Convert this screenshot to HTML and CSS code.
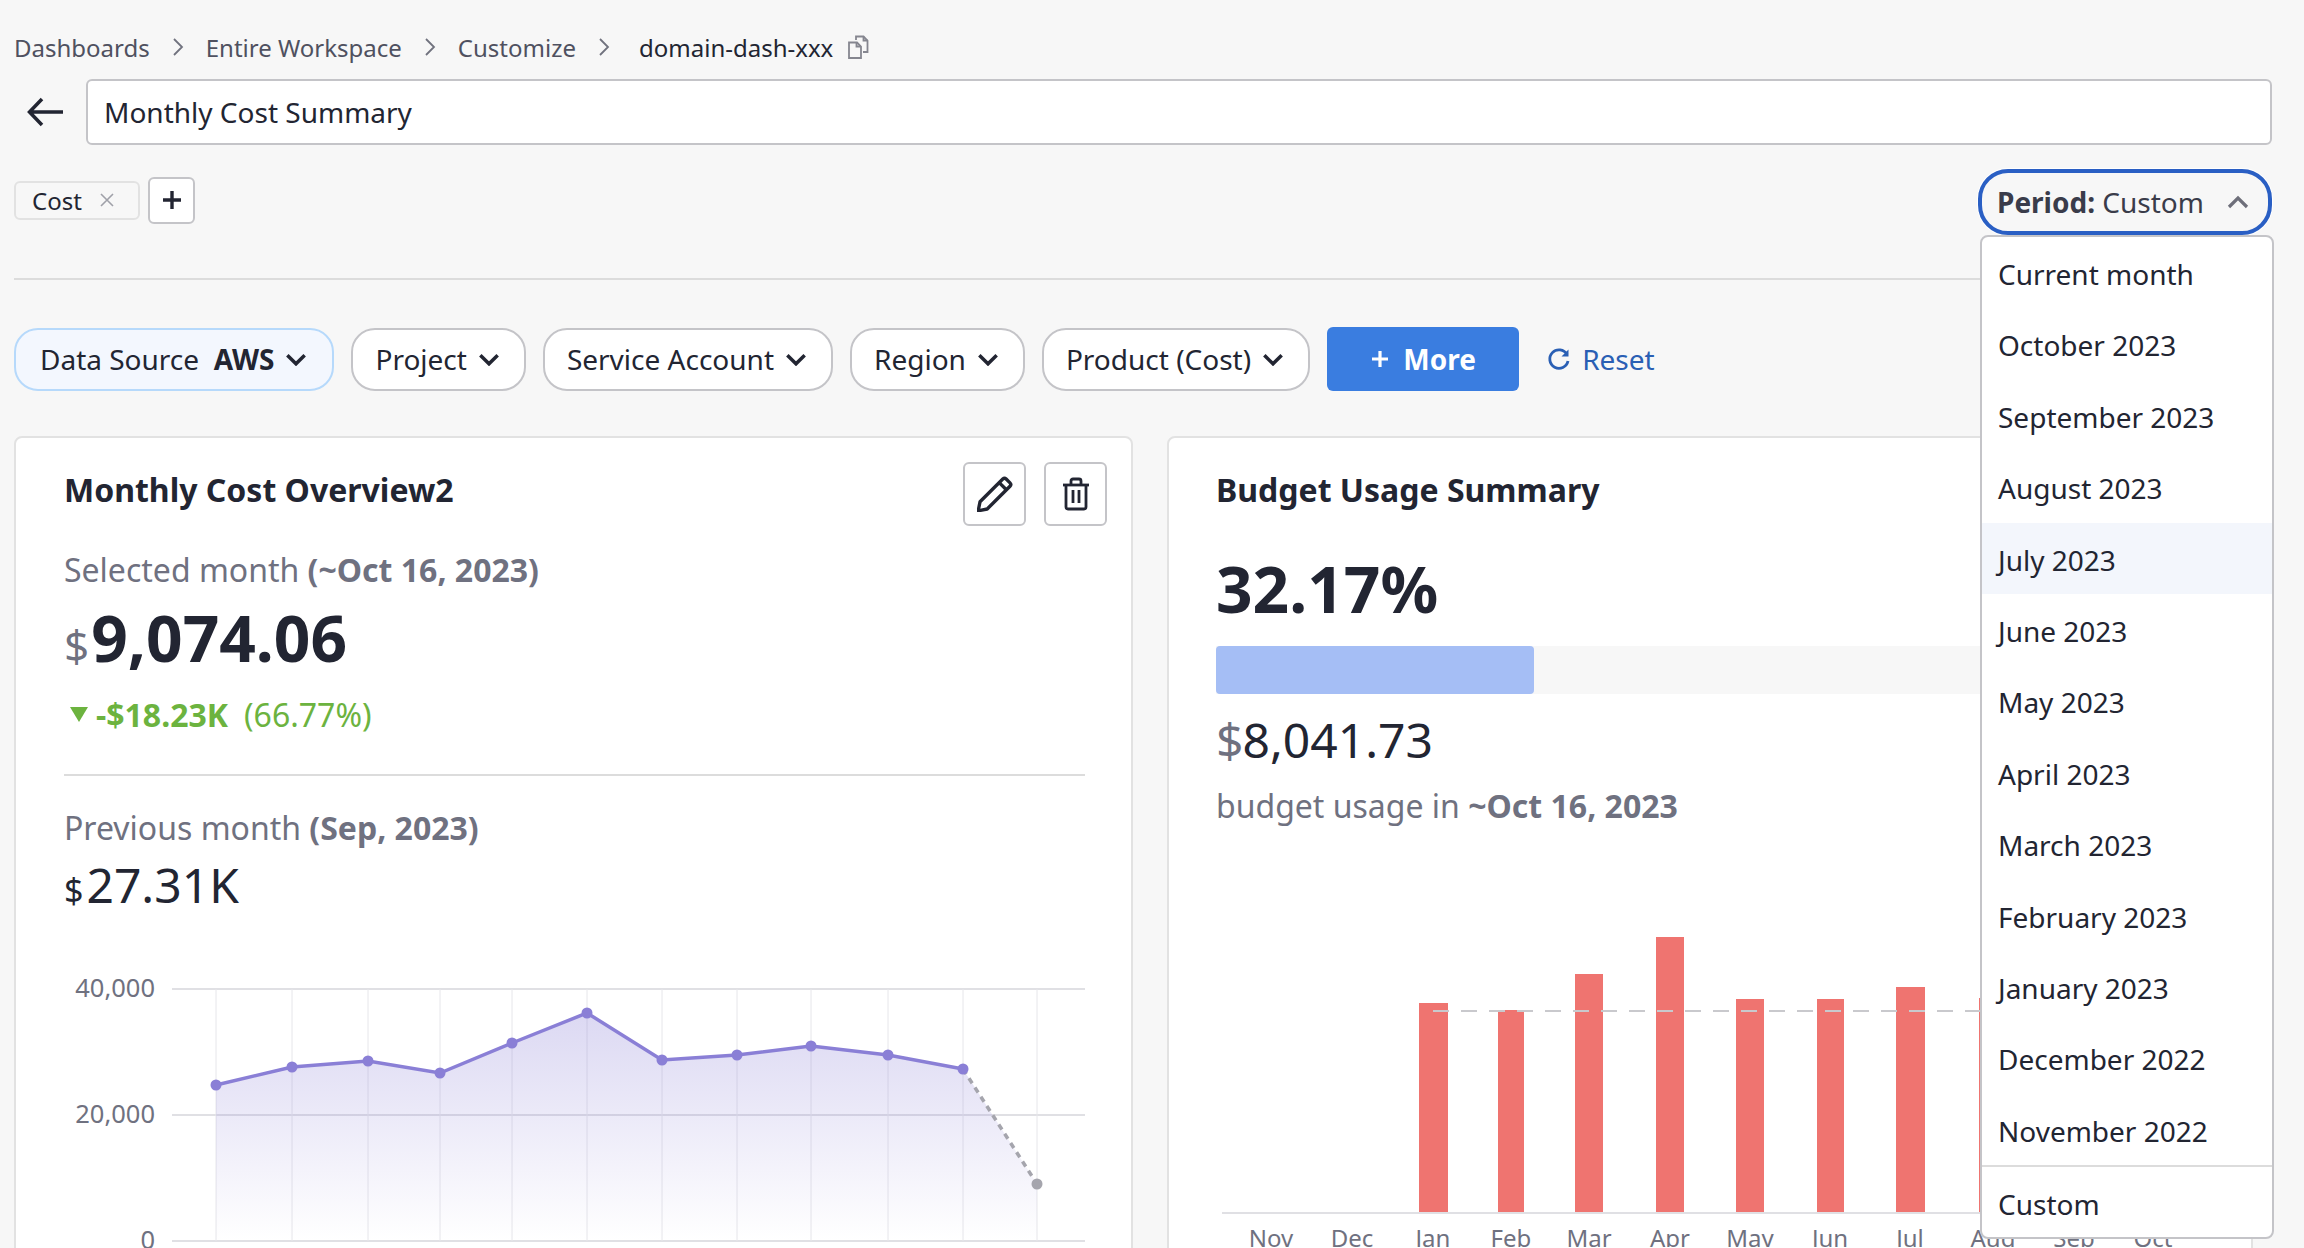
FILE: index.html
```html
<!DOCTYPE html>
<html lang="en">
<head>
    <meta charset="UTF-8">
    <title>Monthly Cost Summary</title>
    <link rel="stylesheet" href="styles.css">
</head>
<body>
    <div class="page">
        <nav class="breadcrumb">
            <span>Dashboards</span>
            <svg class="crumb-sep" viewBox="0 0 12 20"><path d="M2 2l8 8-8 8"/></svg>
            <span>Entire Workspace</span>
            <svg class="crumb-sep" viewBox="0 0 12 20"><path d="M2 2l8 8-8 8"/></svg>
            <span>Customize</span>
            <svg class="crumb-sep" viewBox="0 0 12 20"><path d="M2 2l8 8-8 8"/></svg>
            <span class="crumb-current">domain-dash-xxx</span>
            <svg class="copy-icon" viewBox="0 0 24 24"><path d="M9 5V1.500h7.500l4 4V17H16"/><path d="M16.500 1.500v4h4"/><path d="M2 7.500h8l4 4V23H2z"/><path d="M9.500 7.500v4H14"/></svg>
        </nav>

        <div class="title-row">
            <svg class="back-icon" viewBox="0 0 38 30"><path d="M36 15H3M15 2L2.500 15 15 28"/></svg>
            <div class="title-input">Monthly Cost Summary</div>
        </div>

        <div class="tag-row">
            <div class="tags">
                <div class="tag">Cost
                    <svg class="tag-x" viewBox="0 0 14 14"><path d="M1 1l12 12M13 1L1 13"/></svg>
                </div>
                <div class="tag-add">
                    <svg viewBox="0 0 20 20"><path d="M10 1v18M1 10h18"/></svg>
                </div>
            </div>
            <div class="period">
                <div class="period-btn">
                    <span><b>Period:</b> Custom</span>
                    <svg class="period-chevron" viewBox="0 0 22 14"><path d="M2 12l9-9 9 9"/></svg>
                </div>
                <ul class="period-menu">
                    <li>Current month</li>
                    <li>October 2023</li>
                    <li>September 2023</li>
                    <li>August 2023</li>
                    <li class="hovered">July 2023</li>
                    <li>June 2023</li>
                    <li>May 2023</li>
                    <li>April 2023</li>
                    <li>March 2023</li>
                    <li>February 2023</li>
                    <li>January 2023</li>
                    <li>December 2022</li>
                    <li>November 2022</li>
                    <li class="custom">Custom</li>
                </ul>
            </div>
        </div>

        <hr class="divider">

        <div class="filters">
            <div class="filter selected">
                <span>Data Source&nbsp; <b>AWS</b></span>
                <svg class="chevron" viewBox="0 0 20 12"><path d="M2 2l8 8 8-8"/></svg>
            </div>
            <div class="filter">
                <span>Project</span>
                <svg class="chevron" viewBox="0 0 20 12"><path d="M2 2l8 8 8-8"/></svg>
            </div>
            <div class="filter">
                <span>Service Account</span>
                <svg class="chevron" viewBox="0 0 20 12"><path d="M2 2l8 8 8-8"/></svg>
            </div>
            <div class="filter">
                <span>Region</span>
                <svg class="chevron" viewBox="0 0 20 12"><path d="M2 2l8 8 8-8"/></svg>
            </div>
            <div class="filter">
                <span>Product (Cost)</span>
                <svg class="chevron" viewBox="0 0 20 12"><path d="M2 2l8 8 8-8"/></svg>
            </div>
            <div class="more-btn">
                <svg viewBox="0 0 20 20"><path d="M10 2v16M2 10h16"/></svg>
                More
            </div>
            <div class="reset">
                <svg viewBox="0 0 24 24"><path class="reset-arc" d="M20 7.500A9.200 9.200 0 1 0 21 14"/><path class="reset-tip" d="M21.500 2.500v7h-7z"/></svg>
                Reset
            </div>
        </div>

        <div class="cards">
            <section class="card">
                <div class="card-head">
                    <h2>Monthly Cost Overview2</h2>
                    <div class="card-actions">
                        <div class="icon-btn">
                            <svg viewBox="3 3 30 30"><path d="M4 32l1.500-7.500L24.500 5.500a2 2 0 0 1 2.800 0l3.200 3.200a2 2 0 0 1 0 2.800L11.500 30.500z"/><path d="M21.500 8.500l6 6"/></svg>
                        </div>
                        <div class="icon-btn">
                            <svg viewBox="0 0 36 36"><path d="M5 9h26"/><path d="M13 8V5a2 2 0 0 1 2-2h6a2 2 0 0 1 2 2v3"/><path d="M8 9v22a2 2 0 0 0 2 2h16a2 2 0 0 0 2-2V9"/><path d="M15 14v13M21 14v13"/></svg>
                        </div>
                    </div>
                </div>
                <p class="label first-label">Selected month <b>(~Oct 16, 2023)</b></p>
                <p class="amount-big"><span class="currency">$</span>9,074.06</p>
                <p class="delta"><i class="delta-arrow"></i><b>-$18.23K</b><span>(66.77%)</span></p>
                <hr class="card-divider">
                <p class="label prev-label">Previous month <b>(Sep, 2023)</b></p>
                <p class="amount-mid prev-amount"><span class="currency-dark">$</span>27.31K</p>
                <svg class="trend-chart" viewBox="64 960 1021 288">
                    <defs>
                        <linearGradient id="areaFill" x1="0" y1="0" x2="0" y2="1">
                            <stop offset="0" stop-color="#8a7fd6" stop-opacity="0.3"/>
                            <stop offset="1" stop-color="#8a7fd6" stop-opacity="0"/>
                        </linearGradient>
                    </defs>
                    <path class="grid" d="M172 989H1085M172 1115H1085M172 1241H1085"/>
                    <path class="grid-v" d="M216 989V1241M292 989V1241M368 989V1241M440 989V1241M512 989V1241M587 989V1241M662 989V1241M737 989V1241M811 989V1241M888 989V1241M963 989V1241M1037 989V1241"/>
                    <path fill="url(#areaFill)" d="M216 1085L292 1067 368 1061 440 1073 512 1043 587 1013 662 1060 737 1055 811 1046 888 1055 963 1069 1037 1184V1241H216z"/>
                    <path class="trend-line" d="M216 1085L292 1067 368 1061 440 1073 512 1043 587 1013 662 1060 737 1055 811 1046 888 1055 963 1069"/>
                    <path class="trend-forecast" d="M963 1069L1037 1184"/>
                    <g class="trend-dots">
                        <circle cx="216" cy="1085" r="5.500"/><circle cx="292" cy="1067" r="5.500"/><circle cx="368" cy="1061" r="5.500"/><circle cx="440" cy="1073" r="5.500"/><circle cx="512" cy="1043" r="5.500"/><circle cx="587" cy="1013" r="5.500"/><circle cx="662" cy="1060" r="5.500"/><circle cx="737" cy="1055" r="5.500"/><circle cx="811" cy="1046" r="5.500"/><circle cx="888" cy="1055" r="5.500"/><circle cx="963" cy="1069" r="5.500"/>
                    </g>
                    <circle class="forecast-dot" cx="1037" cy="1184" r="5.500"/>
                    <text class="axis-text" x="155" y="997" text-anchor="end">40,000</text>
                    <text class="axis-text" x="155" y="1123" text-anchor="end">20,000</text>
                    <text class="axis-text" x="155" y="1249" text-anchor="end">0</text>
                </svg>
            </section>

            <section class="card card-right">
                <div class="card-head">
                    <h2>Budget Usage Summary</h2>
                </div>
                <p class="amount-big usage-pct">32.17%</p>
                <div class="usage-bar"><div class="usage-fill"></div></div>
                <p class="amount-mid usage-amount"><span class="currency-mid">$</span>8,041.73</p>
                <p class="label usage-label">budget usage in <b>~Oct 16, 2023</b></p>
                <svg class="budget-chart" viewBox="1216 930 1035 318">
                    <g class="bars">
                        <rect x="1419" y="1004" width="29" height="210"/>
                        <rect x="1498" y="1011" width="26" height="203"/>
                        <rect x="1575" y="975" width="28" height="239"/>
                        <rect x="1656" y="938" width="28" height="276"/>
                        <rect x="1736" y="1000" width="28" height="214"/>
                        <rect x="1817" y="1000" width="27" height="214"/>
                        <rect x="1896" y="988" width="29" height="226"/>
                        <rect x="1979" y="999" width="28" height="215"/>
                    </g>
                    <path class="budget-line" d="M1433 1012H2160"/>
                    <path class="grid" d="M1222 1214H2251"/>
                    <g class="month-labels">
                        <text x="1271" y="1248">Nov</text>
                        <text x="1352" y="1248">Dec</text>
                        <text x="1433" y="1248">Jan</text>
                        <text x="1511" y="1248">Feb</text>
                        <text x="1589" y="1248">Mar</text>
                        <text x="1670" y="1248">Apr</text>
                        <text x="1750" y="1248">May</text>
                        <text x="1830" y="1248">Jun</text>
                        <text x="1910" y="1248">Jul</text>
                        <text x="1993" y="1248">Aug</text>
                        <text x="2074" y="1248">Sep</text>
                        <text x="2153" y="1248">Oct</text>
                    </g>
                </svg>
            </section>
        </div>
    </div>
</body>
</html>
```

FILE: styles.css
```css
* {
    box-sizing: border-box;
}
html, body {
    height: 1248px;
    overflow: hidden;
}
body {
    margin: 0;
    background: #f7f7f7;
    color: #222532;
    font-family: "Noto Sans", "Open Sans", sans-serif;
}
p, h2, ul {
    margin: 0;
    padding: 0;
}
svg {
    display: block;
    fill: none;
}
.page {
    padding: 29px 32px 0 14px;
}

/* breadcrumb */
.breadcrumb {
    display: flex;
    align-items: center;
    height: 36px;
    font-size: 24px;
    color: #4f5160;
}
.crumb-sep {
    width: 12px;
    height: 20px;
    margin: 0 22px 0 22px;
    stroke: #70727e;
    stroke-width: 1.800;
}
.crumb-current {
    color: #222532;
    margin-left: 7px;
}
.copy-icon {
    width: 24px;
    height: 24px;
    margin-left: 14px;
    stroke: #85868f;
    stroke-width: 1.800;
}

/* title */
.title-row {
    display: flex;
    align-items: center;
    margin-top: 14px;
}
.back-icon {
    width: 38px;
    height: 30px;
    margin: 0 21px 0 13px;
    stroke: #222532;
    stroke-width: 3.500;
}
.title-input {
    flex: 1;
    height: 66px;
    line-height: 62px;
    padding-left: 16px;
    font-size: 28px;
    background: #fff;
    border: 2px solid #c4c4c8;
    border-radius: 6px;
}

/* tags and period */
.tag-row {
    display: flex;
    justify-content: space-between;
    margin-top: 24px;
}
.tags {
    display: flex;
    align-items: center;
    gap: 8px;
    height: 56px;
    margin-top: 3px;
}
.tag {
    display: flex;
    align-items: center;
    justify-content: space-between;
    width: 126px;
    height: 39px;
    padding: 0 24px 0 16px;
    font-size: 24px;
    background: #f7f7f7;
    border: 2px solid #e2e2e2;
    border-radius: 6px;
}
.tag-x {
    width: 14px;
    height: 14px;
    stroke: #a0a1a9;
    stroke-width: 1.600;
}
.tag-add {
    display: flex;
    align-items: center;
    justify-content: center;
    width: 47px;
    height: 47px;
    background: #fff;
    border: 2px solid #c4c4c8;
    border-radius: 6px;
}
.tag-add svg {
    width: 20px;
    height: 20px;
    stroke: #222532;
    stroke-width: 3.400;
}
.period {
    position: relative;
}
.period-btn {
    display: flex;
    align-items: center;
    justify-content: space-between;
    width: 294px;
    height: 66px;
    padding: 0 19px 0 15px;
    font-size: 28px;
    color: #3a3c4a;
    border: 4px solid #2a5fc4;
    border-radius: 30px;
    box-shadow: 0 0 0 1px #fff;
}
.period-chevron {
    width: 22px;
    height: 14px;
    stroke: #6e6f7a;
    stroke-width: 3.200;
}
.period-menu {
    position: absolute;
    top: 66px;
    right: -2px;
    z-index: 5;
    width: 294px;
    height: 1004px;
    list-style: none;
    font-size: 28px;
    background: #fff;
    border: 2px solid #c4c4c8;
    border-radius: 8px;
}
.period-menu li {
    height: 71.400px;
    line-height: 75px;
    padding-left: 16px;
}
.period-menu .hovered {
    background: #f3f6fc;
}
.period-menu .custom {
    height: 72px;
    line-height: 75px;
    border-top: 2px solid #dcdcdc;
}
.divider {
    height: 2px;
    margin: 43px 0 0;
    border: 0;
    background: #dcdcdc;
}

/* filters */
.filters {
    display: flex;
    align-items: center;
    gap: 17px;
    margin-top: 47px;
}
.filter {
    display: flex;
    align-items: center;
    gap: 11px;
    height: 63px;
    padding: 0 24px 0 22px;
    font-size: 28px;
    background: #fff;
    border: 2px solid #c4c4c8;
    border-radius: 24px;
}
.filter.selected {
    padding: 0 25px 0 24px;
    background: #f3f7fe;
    border-color: #b6d9fb;
}
.chevron {
    width: 22px;
    height: 13px;
    stroke: #222532;
    stroke-width: 3.200;
}
.more-btn {
    display: flex;
    align-items: center;
    justify-content: center;
    gap: 13px;
    width: 192px;
    height: 64px;
    font-size: 28px;
    font-weight: 700;
    color: #fff;
    background: #3a7de0;
    border-radius: 6px;
}
.more-btn svg {
    width: 20px;
    height: 20px;
    stroke: #fff;
    stroke-width: 3.200;
}
.reset {
    display: flex;
    align-items: center;
    gap: 11px;
    margin-left: 11px;
    font-size: 28px;
    color: #2a5fb4;
}
.reset svg {
    width: 24px;
    height: 24px;
}
.reset-arc {
    stroke: #2a5fb4;
    stroke-width: 2.800;
}
.reset-tip {
    fill: #2a5fb4;
}

/* cards */
.cards {
    display: grid;
    grid-template-columns: 1119px 1086px;
    gap: 34px;
    margin-top: 45px;
}
.card {
    height: 830px;
    padding: 24px 46px 0 48px;
    background: #fff;
    border: 2px solid #e2e2e2;
    border-radius: 8px;
}
.card-right {
    padding-left: 47px;
}
.card-head {
    display: flex;
    justify-content: space-between;
    min-height: 64px;
}
h2 {
    font-size: 32px;
    line-height: 56px;
    font-weight: 700;
}
.card-actions {
    display: flex;
    gap: 18px;
    margin-right: -22px;
}
.icon-btn {
    display: flex;
    align-items: center;
    justify-content: center;
    width: 63px;
    height: 64px;
    border: 2px solid #c4c4c8;
    border-radius: 6px;
}
.icon-btn svg {
    width: 36px;
    height: 36px;
    stroke: #222532;
    stroke-width: 2.800;
    stroke-linejoin: round;
}
.label {
    height: 40px;
    line-height: 40px;
    font-size: 32px;
    color: #6f7180;
}
.first-label {
    margin-top: 24px;
}
.amount-big {
    height: 80px;
    line-height: 80px;
    margin-top: 8px;
    font-size: 64px;
    font-weight: 700;
}
.currency {
    font-size: 44px;
    font-weight: 400;
    color: #6f7180;
    margin-right: 2px;
}
.delta {
    display: flex;
    align-items: center;
    height: 36px;
    margin-top: 18px;
    font-size: 32px;
    color: #6cb33f;
}
.delta-arrow {
    width: 0;
    height: 0;
    margin: 0 8px 0 6px;
    border-style: solid;
    border-width: 15px 9px 0;
    border-color: #6cb33f transparent transparent;
}
.delta span {
    margin-left: 16px;
}
.card-divider {
    height: 2px;
    margin: 42px 0 0;
    border: 0;
    background: #dcdcdc;
}
.prev-label {
    margin-top: 32px;
}
.amount-mid {
    height: 60px;
    line-height: 60px;
    margin-top: 9px;
    font-size: 48px;
}
.prev-amount {
    margin-top: 7px;
}
.currency-dark {
    font-size: 34px;
    margin-right: 3px;
}
.trend-chart {
    width: 1021px;
    height: 288px;
    margin-top: 45px;
}
.grid {
    stroke: #e0e0e4;
    stroke-width: 2;
}
.grid-v {
    stroke: #e6e6ea;
    stroke-width: 1;
}
.trend-line {
    stroke: #8a7fd6;
    stroke-width: 3.500;
}
.trend-forecast {
    stroke: #a5a5ad;
    stroke-width: 3.500;
    stroke-dasharray: 6 5;
}
.trend-dots circle {
    fill: #8a7fd6;
}
.forecast-dot {
    fill: #a5a5ad;
}
.axis-text {
    font-size: 25.500px;
    fill: #6f7180;
}

/* budget card */
.usage-pct {
    margin-top: 23px;
}
.usage-bar {
    height: 48px;
    margin: 17px -46px 0 0;
    background: #f7f7f7;
}
.usage-fill {
    width: 318px;
    height: 100%;
    background: #a5bef5;
    border-radius: 4px;
}
.usage-amount {
    margin-top: 16px;
}
.currency-mid {
    color: #6f7180;
    margin-right: -1px;
}
.usage-label {
    margin-top: 16px;
}
.budget-chart {
    width: 1035px;
    height: 318px;
    margin-top: 103px;
}
.bars rect {
    fill: #ef7470;
}
.budget-line {
    stroke: #c9c9cd;
    stroke-width: 2;
    stroke-dasharray: 16 12;
}
.month-labels text {
    font-size: 24px;
    fill: #6f7180;
    text-anchor: middle;
}
```
